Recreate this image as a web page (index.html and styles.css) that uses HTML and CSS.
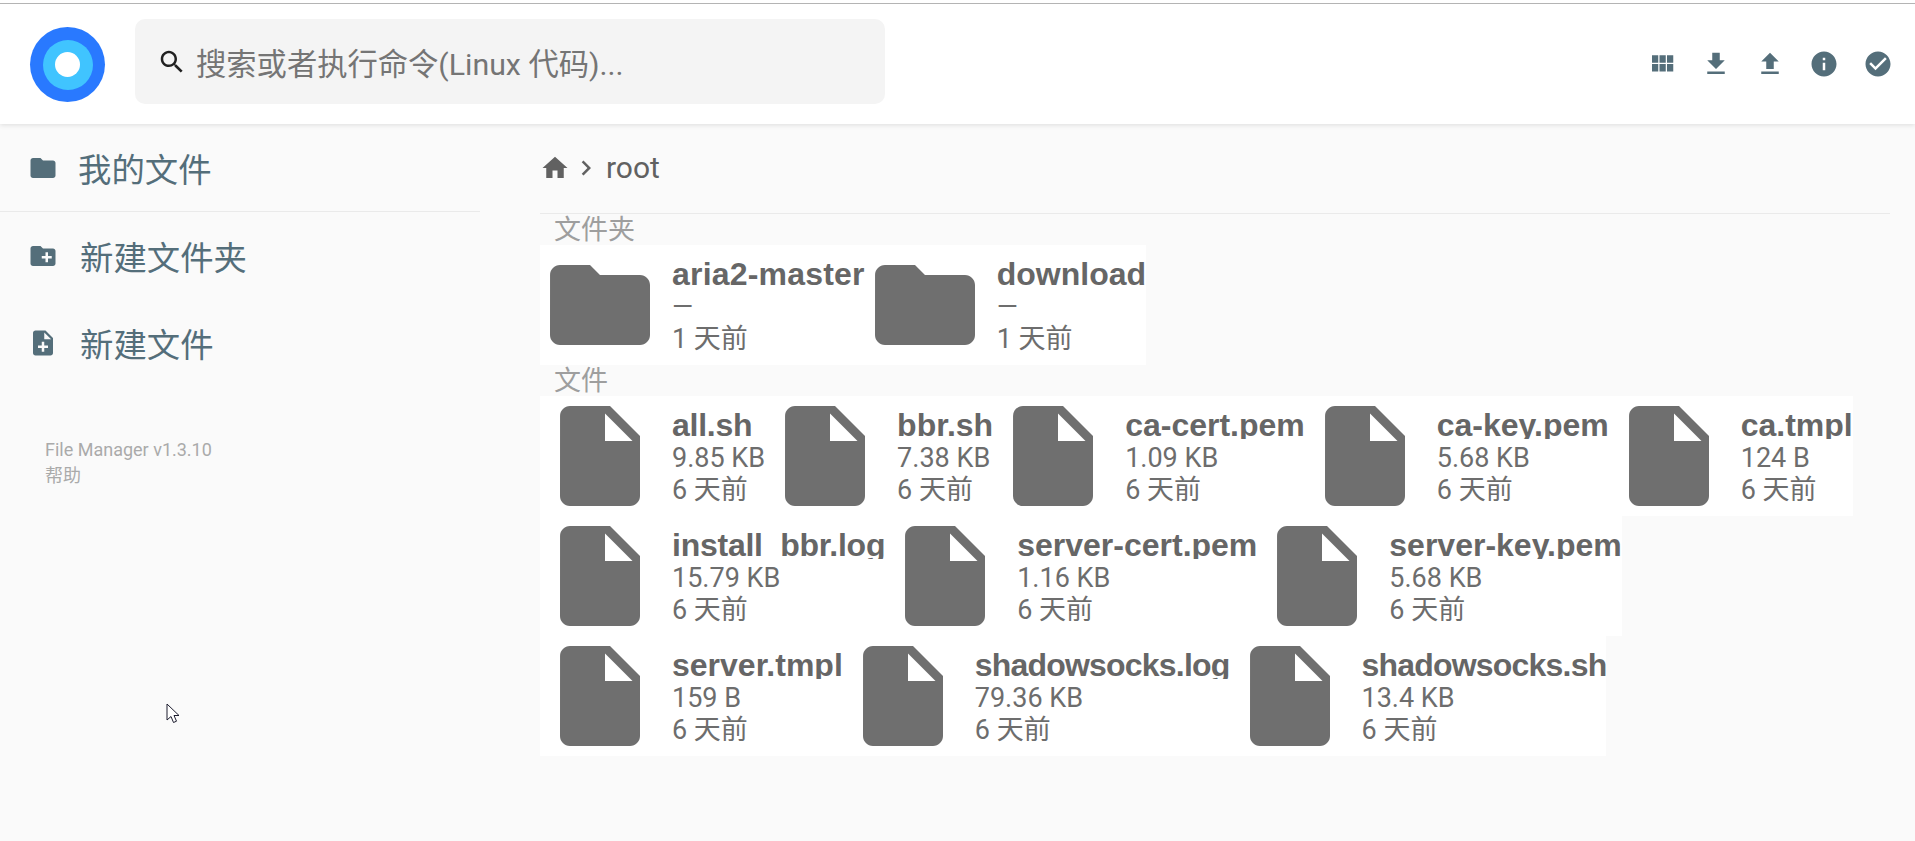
FILE: index.html
```html
<!DOCTYPE html>
<html lang="zh-CN">

<head>
    <meta charset="UTF-8">
    <meta name="viewport" content="width=device-width, initial-scale=1.0">
    <title>File Manager</title>
    <link rel="stylesheet" href="styles.css">
</head>

<body>
    <header class="top-bar">
        <div class="logo"><div class="logo-mid"><div class="logo-core"></div></div></div>
        <div class="search">
            <svg class="icon search-icon" viewBox="0 0 24 24"><path d="M15.5 14h-.79l-.28-.27C15.41 12.59 16 11.11 16 9.5 16 5.91 13.09 3 9.5 3S3 5.91 3 9.5 5.91 16 9.5 16c1.61 0 3.09-.59 4.23-1.57l.27.28v.79l5 4.99L20.49 19l-4.99-5zm-6 0C7.01 14 5 11.99 5 9.5S7.01 5 9.5 5 14 7.01 14 9.5 11.99 14 9.5 14z"/></svg>
            <span>搜索或者执行命令(Linux 代码)...</span>
        </div>
        <div class="actions">
            <svg class="icon" viewBox="0 0 24 24"><path d="M4 11h5V5H4v6zm0 7h5v-6H4v6zm6 0h5v-6h-5v6zm6 0h5v-6h-5v6zm-6-7h5V5h-5v6zm6-6v6h5V5h-5z"/></svg>
            <svg class="icon" viewBox="0 0 24 24"><path d="M19 9h-4V3H9v6H5l7 7 7-7zM5 18v2h14v-2H5z"/></svg>
            <svg class="icon" viewBox="0 0 24 24"><path d="M9 16h6v-6h4l-7-7-7 7h4zm-4 2h14v2H5z"/></svg>
            <svg class="icon" viewBox="0 0 24 24"><path d="M12 2C6.48 2 2 6.48 2 12s4.48 10 10 10 10-4.48 10-10S17.52 2 12 2zm1 15h-2v-6h2v6zm0-8h-2V7h2v2z"/></svg>
            <svg class="icon" viewBox="0 0 24 24"><path d="M12 2C6.48 2 2 6.48 2 12s4.48 10 10 10 10-4.48 10-10S17.52 2 12 2zm-2 15l-5-5 1.41-1.41L10 14.17l7.59-7.59L19 8l-9 9z"/></svg>
        </div>
    </header>

    <div class="page">
        <aside class="sidebar">
            <div class="side-item side-first">
                <svg class="icon" viewBox="0 0 24 24"><path d="M10 4H4c-1.1 0-1.99.9-1.99 2L2 18c0 1.1.9 2 2 2h16c1.1 0 2-.9 2-2V8c0-1.1-.9-2-2-2h-8l-2-2z"/></svg>
                <span>我的文件</span>
            </div>
            <div class="side-item">
                <svg class="icon" viewBox="0 0 24 24"><path d="M20 6h-8l-2-2H4c-1.11 0-1.99.89-1.99 2L2 18c0 1.11.89 2 2 2h16c1.11 0 2-.89 2-2V8c0-1.11-.89-2-2-2zm-1 8h-3v3h-2v-3h-3v-2h3V9h2v3h3v2z"/></svg>
                <span>新建文件夹</span>
            </div>
            <div class="side-item">
                <svg class="icon" viewBox="0 0 24 24"><path d="M14 2H6c-1.1 0-1.99.9-1.99 2L4 20c0 1.1.89 2 1.99 2H18c1.1 0 2-.9 2-2V8l-6-6zm2 14h-3v3h-2v-3H8v-2h3v-3h2v3h3v2zm-3-7V3.5L18.5 9H13z"/></svg>
                <span>新建文件</span>
            </div>
            <div class="side-foot">
                <div>File Manager v1.3.10</div>
                <div>帮助</div>
            </div>
        </aside>

        <main class="content">
            <div class="crumbs">
                <svg class="crumb-home" viewBox="0 0 24 24"><path d="M10 20v-6h4v6h5v-8h3L12 3 2 12h3v8z"/></svg>
                <svg class="crumb-sep" viewBox="0 0 24 24"><path d="M10 6L8.59 7.41 13.17 12l-4.58 4.59L10 18l6-6z"/></svg>
                <span>root</span>
            </div>

            <div class="label">文件夹</div>
            <div class="row">
                <div class="item">
                    <svg class="thumb" viewBox="0 0 24 24"><path d="M10 4H4c-1.1 0-1.99.9-1.99 2L2 18c0 1.1.9 2 2 2h16c1.1 0 2-.9 2-2V8c0-1.1-.9-2-2-2h-8l-2-2z"/></svg>
                    <div class="info"><div class="name name-wide">aria2-master</div><div class="meta">—</div><div class="meta">1 天前</div></div>
                </div>
                <div class="item">
                    <svg class="thumb" viewBox="0 0 24 24"><path d="M10 4H4c-1.1 0-1.99.9-1.99 2L2 18c0 1.1.9 2 2 2h16c1.1 0 2-.9 2-2V8c0-1.1-.9-2-2-2h-8l-2-2z"/></svg>
                    <div class="info"><div class="name">download</div><div class="meta">—</div><div class="meta">1 天前</div></div>
                </div>
            </div>

            <div class="label">文件</div>
            <div class="row">
                <div class="item">
                    <svg class="thumb" viewBox="0 0 24 24"><path d="M6 2c-1.1 0-1.99.9-1.99 2L4 20c0 1.1.89 2 1.99 2H18c1.1 0 2-.9 2-2V8l-6-6H6zm7 7V3.5L18.5 9H13z"/></svg>
                    <div class="info"><div class="name name-snug">all.sh</div><div class="meta">9.85 KB</div><div class="meta">6 天前</div></div>
                </div>
                <div class="item">
                    <svg class="thumb" viewBox="0 0 24 24"><path d="M6 2c-1.1 0-1.99.9-1.99 2L4 20c0 1.1.89 2 1.99 2H18c1.1 0 2-.9 2-2V8l-6-6H6zm7 7V3.5L18.5 9H13z"/></svg>
                    <div class="info"><div class="name">bbr.sh</div><div class="meta">7.38 KB</div><div class="meta">6 天前</div></div>
                </div>
                <div class="item">
                    <svg class="thumb" viewBox="0 0 24 24"><path d="M6 2c-1.1 0-1.99.9-1.99 2L4 20c0 1.1.89 2 1.99 2H18c1.1 0 2-.9 2-2V8l-6-6H6zm7 7V3.5L18.5 9H13z"/></svg>
                    <div class="info"><div class="name">ca-cert.pem</div><div class="meta">1.09 KB</div><div class="meta">6 天前</div></div>
                </div>
                <div class="item">
                    <svg class="thumb" viewBox="0 0 24 24"><path d="M6 2c-1.1 0-1.99.9-1.99 2L4 20c0 1.1.89 2 1.99 2H18c1.1 0 2-.9 2-2V8l-6-6H6zm7 7V3.5L18.5 9H13z"/></svg>
                    <div class="info"><div class="name">ca-key.pem</div><div class="meta">5.68 KB</div><div class="meta">6 天前</div></div>
                </div>
                <div class="item">
                    <svg class="thumb" viewBox="0 0 24 24"><path d="M6 2c-1.1 0-1.99.9-1.99 2L4 20c0 1.1.89 2 1.99 2H18c1.1 0 2-.9 2-2V8l-6-6H6zm7 7V3.5L18.5 9H13z"/></svg>
                    <div class="info"><div class="name">ca.tmpl</div><div class="meta">124 B</div><div class="meta">6 天前</div></div>
                </div>
            </div>
            <div class="row">
                <div class="item">
                    <svg class="thumb" viewBox="0 0 24 24"><path d="M6 2c-1.1 0-1.99.9-1.99 2L4 20c0 1.1.89 2 1.99 2H18c1.1 0 2-.9 2-2V8l-6-6H6zm7 7V3.5L18.5 9H13z"/></svg>
                    <div class="info"><div class="name name-snug">install_bbr.log</div><div class="meta">15.79 KB</div><div class="meta">6 天前</div></div>
                </div>
                <div class="item">
                    <svg class="thumb" viewBox="0 0 24 24"><path d="M6 2c-1.1 0-1.99.9-1.99 2L4 20c0 1.1.89 2 1.99 2H18c1.1 0 2-.9 2-2V8l-6-6H6zm7 7V3.5L18.5 9H13z"/></svg>
                    <div class="info"><div class="name">server-cert.pem</div><div class="meta">1.16 KB</div><div class="meta">6 天前</div></div>
                </div>
                <div class="item">
                    <svg class="thumb" viewBox="0 0 24 24"><path d="M6 2c-1.1 0-1.99.9-1.99 2L4 20c0 1.1.89 2 1.99 2H18c1.1 0 2-.9 2-2V8l-6-6H6zm7 7V3.5L18.5 9H13z"/></svg>
                    <div class="info"><div class="name">server-key.pem</div><div class="meta">5.68 KB</div><div class="meta">6 天前</div></div>
                </div>
            </div>
            <div class="row">
                <div class="item">
                    <svg class="thumb" viewBox="0 0 24 24"><path d="M6 2c-1.1 0-1.99.9-1.99 2L4 20c0 1.1.89 2 1.99 2H18c1.1 0 2-.9 2-2V8l-6-6H6zm7 7V3.5L18.5 9H13z"/></svg>
                    <div class="info"><div class="name">server.tmpl</div><div class="meta">159 B</div><div class="meta">6 天前</div></div>
                </div>
                <div class="item">
                    <svg class="thumb" viewBox="0 0 24 24"><path d="M6 2c-1.1 0-1.99.9-1.99 2L4 20c0 1.1.89 2 1.99 2H18c1.1 0 2-.9 2-2V8l-6-6H6zm7 7V3.5L18.5 9H13z"/></svg>
                    <div class="info"><div class="name name-tight">shadowsocks.log</div><div class="meta">79.36 KB</div><div class="meta">6 天前</div></div>
                </div>
                <div class="item">
                    <svg class="thumb" viewBox="0 0 24 24"><path d="M6 2c-1.1 0-1.99.9-1.99 2L4 20c0 1.1.89 2 1.99 2H18c1.1 0 2-.9 2-2V8l-6-6H6zm7 7V3.5L18.5 9H13z"/></svg>
                    <div class="info"><div class="name name-tight">shadowsocks.sh</div><div class="meta">13.4 KB</div><div class="meta">6 天前</div></div>
                </div>
            </div>
        </main>
    </div>

    <svg class="cursor" viewBox="0 0 13 21"><path d="M1 1v16l4-3.500 2.500 6 3-1.300-2.500-5.700h5z" fill="#fff" stroke="#1c1c2e" stroke-width="1"/></svg>
</body>

</html>
```

FILE: styles.css
```css
body {
    margin: 0;
    padding: 0;
    height: 841px;
    overflow: hidden;
    background-color: #fafafa;
    font-family: Roboto, "Noto Sans CJK SC", sans-serif;
}

.icon {
    width: 30px;
    height: 30px;
    flex: none;
    fill: #546e7a;
}

.top-bar {
    height: 124px;
    box-sizing: border-box;
    padding: 3px 22px 0 30px;
    display: flex;
    align-items: center;
    background: #fff;
    box-shadow: 0 1px 5px rgba(0, 0, 0, 0.12), inset 0 3px 0 #fff, inset 0 4px 0 #b4b4b4;
}

.logo {
    width: 75px;
    height: 75px;
    margin-top: 2px;
    border-radius: 50%;
    background: #2979ff;
    display: flex;
    align-items: center;
    justify-content: center;
}

.logo-mid {
    width: 50px;
    height: 50px;
    border-radius: 50%;
    background: #40c4ff;
    display: flex;
    align-items: center;
    justify-content: center;
}

.logo-core {
    width: 25px;
    height: 25px;
    border-radius: 50%;
    background: #fff;
}

.search {
    width: 750px;
    height: 85px;
    margin: -4px 0 0 30px;
    padding-left: 22px;
    box-sizing: border-box;
    display: flex;
    align-items: center;
    gap: 9px;
    border-radius: 10px;
    background: #f4f4f4;
    font-size: 30.3px;
    color: #757575;
}

.search-icon {
    fill: #212121;
}

.actions {
    margin-left: auto;
    display: flex;
    gap: 24px;
}

.page {
    display: flex;
}

.sidebar {
    width: 480px;
    margin-right: 60px;
    flex: none;
}

.side-item {
    height: 87px;
    padding-left: 28px;
    display: flex;
    align-items: center;
    gap: 22px;
    font-size: 33.4px;
    color: #546e7a;
}

.side-first {
    gap: 20px;
    border-bottom: 1px solid #eaeaea;
}

.side-foot {
    margin-top: 51px;
    padding-left: 45px;
    font-size: 18px;
    line-height: 26px;
    color: #aaa;
}

.content {
    flex: 1;
    margin-right: 25px;
}

.crumbs {
    height: 90px;
    box-sizing: border-box;
    padding-bottom: 2px;
    border-bottom: 1px solid #eaeaea;
    display: flex;
    align-items: center;
    font-size: 30px;
    color: #616161;
}

.crumb-home {
    width: 30px;
    height: 30px;
    fill: #616161;
}

.crumb-sep {
    width: 30px;
    height: 30px;
    margin: 0 5px 0 1px;
    fill: #616161;
}

.label {
    height: 31px;
    padding-left: 14px;
    font-size: 27px;
    line-height: 33px;
    color: #9e9e9e;
}

.row {
    width: fit-content;
    display: flex;
    background: #fff;
}

.item {
    height: 120px;
    display: flex;
}

.thumb {
    width: 120px;
    height: 120px;
    flex: none;
    fill: #6f6f6f;
}

.info {
    margin-left: 12px;
    padding-top: 13px;
    font-size: 27px;
    line-height: 32px;
    color: #6d6d6d;
    white-space: nowrap;
}

.name {
    height: 30px;
    font-family: "Liberation Sans", "Noto Sans CJK SC", sans-serif;
    font-size: 32px;
    line-height: 33px;
    font-weight: 700;
    color: #666;
}

.name-wide {
    letter-spacing: 0.2px;
}

.name-snug {
    letter-spacing: -0.25px;
}

.name-tight {
    letter-spacing: -0.8px;
}

/* the meta line sits over the name's descenders, same as the real page */
.meta {
    position: relative;
    background: #fff;
}

.name + .meta {
    padding-top: 3px;
}

.cursor {
    position: absolute;
    left: 166px;
    top: 703px;
    width: 13px;
    height: 21px;
}
```
